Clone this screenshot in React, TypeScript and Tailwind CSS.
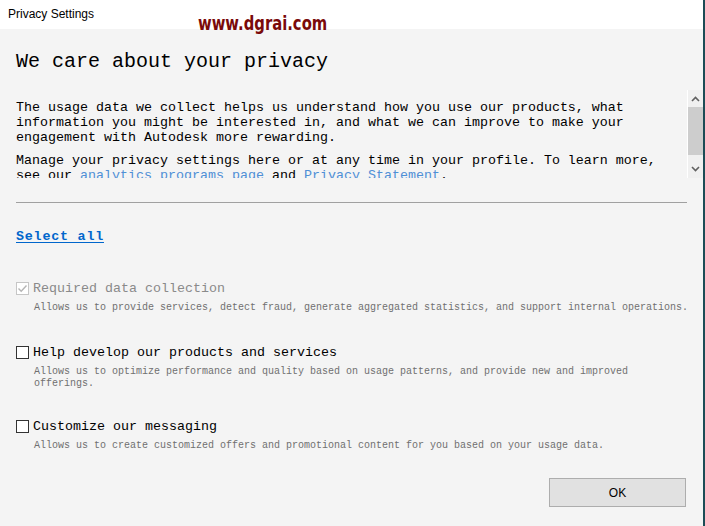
import React from "react";

const mono = { fontFamily: '"Liberation Mono", "DejaVu Sans Mono", monospace' };

function Box({ checked, disabled }: { checked?: boolean; disabled?: boolean }) {
  return (
    <span
      className={`flex h-[13px] w-[13px] shrink-0 items-center justify-center border bg-white ${
        disabled ? "border-[#c6c6c6] bg-[#f4f4f4]" : "border-[#333333]"
      }`}
    >
      {checked && (
        <svg width="11" height="11" viewBox="0 0 11 11" fill="none">
          <path d="M1.5 5.5 L4.2 8.2 L9.5 2.5" stroke="#b5b5b5" strokeWidth="1.4" />
        </svg>
      )}
    </span>
  );
}

function Option({
  label,
  desc,
  checked,
  disabled,
  className,
}: {
  label: string;
  desc: string[];
  checked?: boolean;
  disabled?: boolean;
  className?: string;
}) {
  return (
    <div className={className}>
      <div className="flex items-center gap-[4px]">
        <Box checked={checked} disabled={disabled} />
        <span
          className={`text-[13.33px] leading-[15px] ${disabled ? "text-[#8a8a8a]" : "text-black"}`}
          style={mono}
        >
          {label}
        </span>
      </div>
      <div className="mt-[6px] pl-[18px] text-[10px] leading-[12px] text-[#707070]" style={mono}>
        {desc.map((d) => (
          <div key={d}>{d}</div>
        ))}
      </div>
    </div>
  );
}

export default function App() {
  return (
    <div className="relative flex h-[526px] w-[705px] flex-col overflow-hidden border-r-2 border-[#1d4c56] bg-[#f4f4f4]">
      {/* title bar */}
      <div
        className="h-[29px] shrink-0 bg-white pl-[8px] pt-[6px] text-[12px] leading-[16px] text-black"
        style={{ fontFamily: '"Liberation Sans", Arial, sans-serif' }}
      >
        Privacy Settings
      </div>
      <div
        className="absolute left-[198px] top-[11px] origin-left scale-x-[0.74] text-[20px] font-bold leading-[24px] text-[#7a0a0a]"
        style={{ fontFamily: '"DejaVu Sans", sans-serif' }}
      >
        www.dgrai.com
      </div>

      <h1 className="ml-[16px] mt-[21px] text-[20px] leading-[24px] text-black" style={mono}>
        We care about your privacy
      </h1>

      {/* scrolling intro */}
      <div className="mt-[16px] flex h-[88px] shrink-0">
        <div
          className="flex-1 overflow-hidden pl-[16px] pt-[10px] text-[13.33px] leading-[15px] text-black"
          style={mono}
        >
          <p>
            The usage data we collect helps us understand how you use our products, what
            <br />
            information you might be interested in, and what we can improve to make your
            <br />
            engagement with Autodesk more rewarding.
          </p>
          <p className="mt-[8px]">
            Manage your privacy settings here or at any time in your profile. To learn more,
            <br />
            see our <span className="text-[#4f8fd6]">analytics programs page</span> and{" "}
            <span className="text-[#4f8fd6]">Privacy Statement</span>.
          </p>
        </div>
        <div className="flex w-[16px] flex-col border-l border-white bg-[#f0f0f0]">
          <div className="flex h-[17px] items-center justify-center">
            <svg width="9" height="6" viewBox="0 0 9 6" fill="none">
              <path d="M1 5 L4.5 1.5 L8 5" stroke="#606060" strokeWidth="1.6" />
            </svg>
          </div>
          <div className="h-[48px] bg-[#cdcdcd]" />
          <div className="flex flex-1 items-end justify-center pb-[6px]">
            <svg width="9" height="6" viewBox="0 0 9 6" fill="none">
              <path d="M1 1 L4.5 4.5 L8 1" stroke="#606060" strokeWidth="1.6" />
            </svg>
          </div>
        </div>
      </div>

      <div className="ml-[16px] mr-[16px] mt-[24px] h-px bg-[#a0a0a0]" />

      <div className="ml-[16px] mt-[24px] leading-[15px]">
        <span
          className="text-[13.33px] font-bold leading-[15px] tracking-[0.8px] text-[#0066cc] underline underline-offset-2"
          style={mono}
        >
          Select all
        </span>
      </div>

      <Option
        className="ml-[16px] mt-[37px]"
        label="Required data collection"
        checked
        disabled
        desc={[
          "Allows us to provide services, detect fraud, generate aggregated statistics, and support internal operations.",
        ]}
      />
      <Option
        className="ml-[16px] mt-[31px]"
        label="Help develop our products and services"
        desc={[
          "Allows us to optimize performance and quality based on usage patterns, and provide new and improved",
          "offerings.",
        ]}
      />
      <Option
        className="ml-[16px] mt-[29px]"
        label="Customize our messaging"
        desc={["Allows us to create customized offers and promotional content for you based on your usage data."]}
      />

      <div className="mb-[19px] mr-[17px] mt-auto flex justify-end">
        <button
          className="h-[29px] w-[137px] border border-[#adadad] bg-[#e1e1e1] text-[12px] text-black"
          style={{ fontFamily: '"Liberation Sans", Arial, sans-serif' }}
        >
          OK
        </button>
      </div>
    </div>
  );
}
